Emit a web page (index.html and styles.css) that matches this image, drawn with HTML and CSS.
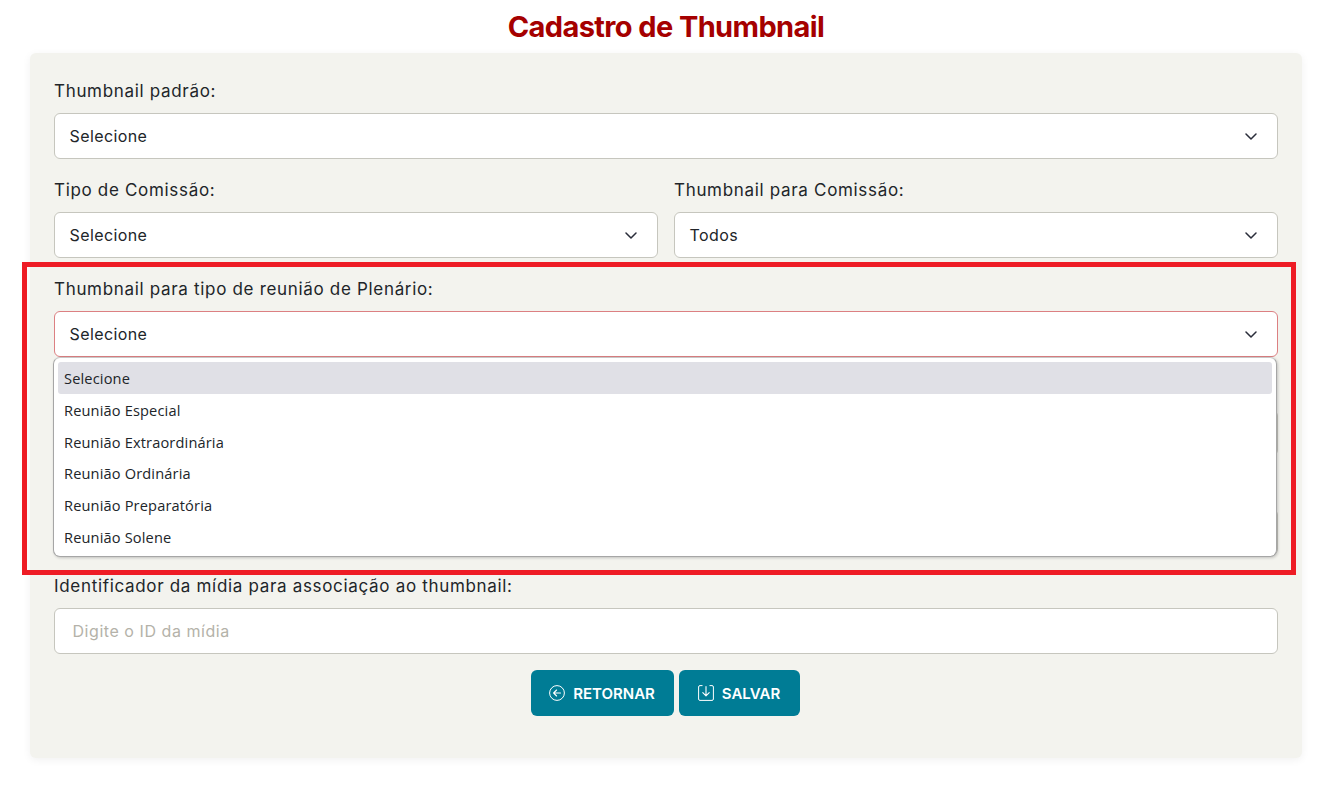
FILE: index.html
```html
<!DOCTYPE html>
<html lang="pt-BR">
<head>
<meta charset="utf-8">
<title>Cadastro de Thumbnail</title>
<link rel="stylesheet" href="styles.css">
</head>
<body>
<svg width="0" height="0" class="defs">
  <symbol id="chev" viewBox="0 0 12 7"><path d="M1 1 6 6 11 1" fill="none" stroke="currentColor" stroke-width="1.5" stroke-linecap="round" stroke-linejoin="round"/></symbol>
</svg>
<main class="page">
  <h1 class="title">Cadastro de Thumbnail</h1>
  <form class="card">
    <div class="field">
      <label class="label">Thumbnail padrão:</label>
      <div class="select"><span>Selecione</span><svg class="chev"><use href="#chev"/></svg></div>
    </div>
    <div class="row">
      <div class="field">
        <label class="label">Tipo de Comissão:</label>
        <div class="select"><span>Selecione</span><svg class="chev"><use href="#chev"/></svg></div>
      </div>
      <div class="field">
        <label class="label">Thumbnail para Comissão:</label>
        <div class="select"><span>Todos</span><svg class="chev"><use href="#chev"/></svg></div>
      </div>
    </div>
    <div class="field open">
      <label class="label">Thumbnail para tipo de reunião de Plenário:</label>
      <div class="select focus"><span>Selecione</span><svg class="chev"><use href="#chev"/></svg></div>
      <ul class="menu">
        <li class="opt active">Selecione</li>
        <li class="opt">Reunião Especial</li>
        <li class="opt">Reunião Extraordinária</li>
        <li class="opt">Reunião Ordinária</li>
        <li class="opt">Reunião Preparatória</li>
        <li class="opt">Reunião Solene</li>
      </ul>
    </div>
    <div class="field">
      <div class="label">&nbsp;</div>
      <div class="select"></div>
    </div>
    <div class="field">
      <div class="label">&nbsp;</div>
      <div class="select"></div>
    </div>
    <div class="field">
      <label class="label">Identificador da mídia para associação ao thumbnail:</label>
      <div class="select input"><span>Digite o ID da mídia</span></div>
    </div>
    <div class="actions">
      <button type="button" class="btn btn-back">
        <svg class="ico" viewBox="0 0 16 16"><circle cx="8" cy="8" r="7.4" fill="none" stroke="currentColor" stroke-width="1"/><path d="M11.5 8H4.8M7.6 5 4.6 8l3 3" fill="none" stroke="currentColor" stroke-width="1.1" stroke-linecap="round" stroke-linejoin="round"/></svg>
        RETORNAR
      </button>
      <button type="button" class="btn btn-save">
        <svg class="ico" viewBox="0 0 16 16"><path d="M4.5 .6H2A1.4 1.4 0 0 0 .6 2v12A1.4 1.4 0 0 0 2 15.4h12a1.4 1.4 0 0 0 1.4-1.4V2A1.4 1.4 0 0 0 14 .6h-2.5" fill="none" stroke="currentColor" stroke-width="1"/><path d="M8 1.5v9M4.8 7.6 8 10.8l3.2-3.2" fill="none" stroke="currentColor" stroke-width="1.1" stroke-linecap="round" stroke-linejoin="round"/></svg>
        SALVAR
      </button>
    </div>
  </form>
  <div class="highlight"></div>
</main>
</body>
</html>
```
FILE: styles.css
```css
* { box-sizing: border-box; }
html, body { margin: 0; padding: 0; background: #fff; }
body { font-family: Inter, "Liberation Sans", sans-serif; color: #212529; height: 801px; overflow: hidden; }
.defs { position: absolute; }
.page { position: relative; width: 1338px; padding: 0 36px 0 30px; }
.title { margin: 0; height: 53px; padding-top: 9px; text-align: center; font-size: 29px; line-height: 36px; font-weight: 700; color: #a50000; letter-spacing: -.6px; }
.card { height: 705px; padding: 24px 24px 0; background: #f3f3ee; border-radius: 6px; box-shadow: 0 2px 8px rgba(0,0,0,.06); }
.field { position: relative; margin-bottom: 17px; }
.label { display: block; font-size: 17px; line-height: 24px; height: 36px; padding-top: 2px; letter-spacing: .68px; color: #212529; }
.row { display: grid; grid-template-columns: 1fr 1fr; gap: 16px; }
.select { display: flex; align-items: center; justify-content: space-between; height: 46px; padding: 0 20px 0 14.5px; background: #fff; border: 1px solid #c6c6be; border-radius: 6px; font-size: 16px; letter-spacing: .4px; }
.select.focus { border-color: #dc8082; }
.chev { width: 12px; height: 7px; color: #2a2d3a; }
.input { padding-left: 17.5px; color: #b4b2a9; letter-spacing: .55px; }
.menu { position: absolute; z-index: 2; left: -1px; right: 1px; top: 82px; height: 200px; margin: 0; padding: 4px; list-style: none; background: #fff; border: 1px solid #a6a6a6; border-top-color: #c8c8c8; border-radius: 7px; box-shadow: 1px 1px 3px rgba(0,0,0,.2); font-family: "Open Sans", sans-serif; font-size: 14.6px; letter-spacing: .15px; }
.opt { height: 31.8px; line-height: 33px; padding-left: 6px; color: #212529; border-radius: 3px; }
.opt.active { background: #e0e0e6; }
.actions { display: flex; justify-content: center; gap: 5px; margin-top: -1px; padding-right: 2px; }
.btn { display: flex; align-items: center; justify-content: center; gap: 8px; height: 46px; border: 0; border-radius: 6px; background: #007c95; color: #fff; font-family: Inter, sans-serif; font-size: 15px; font-weight: 600; }
.btn-back { width: 143px; }
.btn-save { width: 121px; }
.ico { width: 16px; height: 16px; flex: none; }
.highlight { position: absolute; z-index: 3; left: 22px; top: 262px; width: 1274px; height: 313px; border: 5px solid #ee1c25; pointer-events: none; }
```
